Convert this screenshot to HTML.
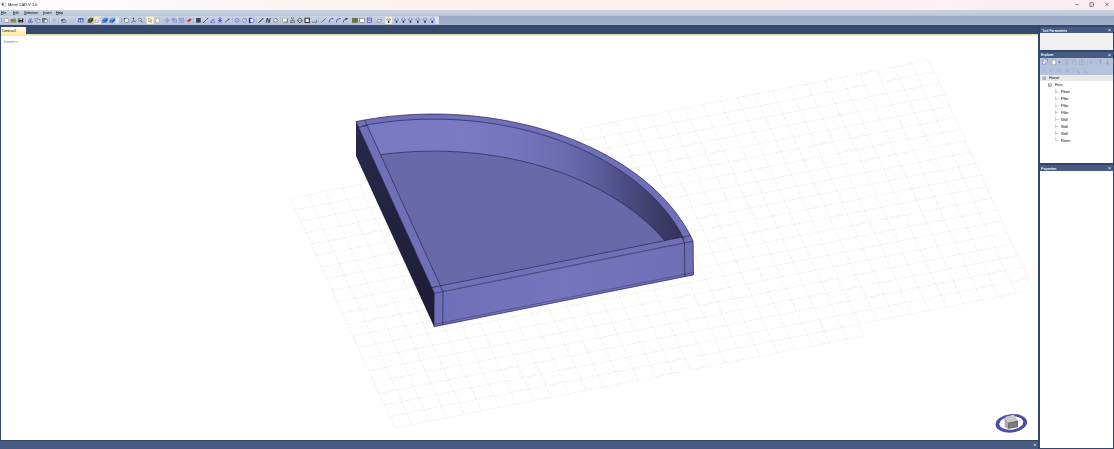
<!DOCTYPE html>
<html><head><meta charset="utf-8"><title>Mirror CAD V 1.0</title>
<style>
html,body{margin:0;padding:0;}
body{width:1114px;height:449px;overflow:hidden;background:#fff;position:relative;font-family:"Liberation Sans",sans-serif;}
.a{position:absolute;}
.t{position:absolute;white-space:nowrap;font-size:4px;line-height:5.8px;color:#222;transform-origin:0 50%;will-change:transform;-webkit-text-stroke:0.05px currentColor;}
.t u{text-decoration-thickness:0.3px;text-underline-offset:0.2px;text-decoration-color:rgba(30,30,30,0.55);}
.ti{color:#333;}
svg{position:absolute;left:0;top:0;}
</style></head><body>
<!-- title bar -->
<div class="a" style="left:0;top:0;width:1114px;height:9.6px;background:linear-gradient(90deg,#fdfcfc 0%,#fcf8f7 14%,#fbf3f0 32%,#fbf1ee 60%,#fcf1f3 85%,#fbebf0 100%);"></div>
<div class="t" style="left:8.10px;top:1.60px;font-size:4.00px;color:#3a3a3a;transform:scale(0.9557,1.0000);">Mirror CAD V 1.0</div>
<!-- menu bar -->
<div class="a" style="left:0;top:9.6px;width:1114px;height:6.4px;background:linear-gradient(180deg,#cbd3e0,#bac6d9);"></div>
<div class="t" style="left:1.10px;top:9.90px;font-size:4.00px;color:#2a2a2a;transform:scale(0.7758,1.0000);"><u>F</u>ile</div>
<div class="t" style="left:13.00px;top:9.90px;font-size:4.00px;color:#2a2a2a;transform:scale(0.8125,1.0000);"><u>E</u>dit</div>
<div class="t" style="left:23.50px;top:9.90px;font-size:4.00px;color:#2a2a2a;transform:scale(0.8569,1.0000);"><u>S</u>election</div>
<div class="t" style="left:42.50px;top:9.90px;font-size:4.00px;color:#2a2a2a;transform:scale(0.8597,1.0000);"><u>I</u>nsert</div>
<div class="t" style="left:55.50px;top:9.90px;font-size:4.00px;color:#2a2a2a;transform:scale(0.8631,1.0000);"><u>H</u>elp</div>
<!-- toolbar band -->
<div class="a" style="left:0;top:16px;width:1114px;height:9.1px;background:linear-gradient(180deg,#9daac7 0%,#9fadc9 72%,#a8b4ce 100%);"></div>
<div class="a" style="left:0;top:16.2px;width:438.5px;height:8.4px;background:linear-gradient(180deg,#cad4e6,#b4c1da);"></div>
<!-- tab strip -->
<div class="a" style="left:0;top:25px;width:1114px;height:8.6px;background:#35496d;"></div>
<div class="a" style="left:0;top:33.6px;width:1039px;height:2.2px;background:linear-gradient(180deg,#dbd3ae,#f4f0e0);"></div>
<div class="a" style="left:1px;top:27px;width:25px;height:7.7px;background:linear-gradient(180deg,#fffef6,#fff6cc 45%,#ffe79a);border-radius:0.6px 0.6px 0 0;"></div>
<div class="t" style="left:2.10px;top:27.70px;font-size:4.00px;color:#3a3a30;transform:scale(0.7445,1.0000);">Construct1</div>
<!-- viewport borders -->
<div class="a" style="left:0;top:33.6px;width:1px;height:407px;background:#35496d;"></div>
<div class="t" style="left:4.30px;top:39.50px;font-size:3.80px;color:#959595;transform:scale(0.8953,1.0000);">Isometric</div>
<!-- status bar -->
<div class="a" style="left:0;top:439.8px;width:1039px;height:9.2px;background:#465a82;"></div>
<div class="a" style="left:0;top:439.8px;width:1039px;height:0.9px;background:#34476a;"></div>
<!-- right panel -->
<div class="a" style="left:1038.1px;top:25px;width:75.9px;height:424px;background:#31466a;"></div>
<div class="a" style="left:1040.3px;top:27px;width:72.3px;height:6.2px;background:#465a82;"></div>
<div class="t" style="left:1041.80px;top:27.50px;font-size:4.00px;color:#fff;transform:scale(0.8584,1.0000);">Tool Parameters</div>
<div class="a" style="left:1040.3px;top:33.4px;width:72.3px;height:16.2px;background:#f0f0f0;"></div>
<div class="a" style="left:1040.3px;top:52.1px;width:72.3px;height:5.8px;background:#465a82;"></div>
<div class="t" style="left:1041.20px;top:52.30px;font-size:4.00px;color:#fff;transform:scale(0.8527,1.0000);">Explorer</div>
<div class="a" style="left:1040.3px;top:57.8px;width:72.3px;height:16.8px;background:#b5c2dc;"></div>
<div class="a" style="left:1040.3px;top:74.6px;width:72.3px;height:88.4px;background:#fff;"></div>
<div class="a" style="left:1040.3px;top:75.1px;width:72.3px;height:6.2px;background:#e9e9e9;"></div>
<div class="a" style="left:1040.3px;top:165.2px;width:72.3px;height:5.9px;background:#465a82;"></div>
<div class="t" style="left:1041.00px;top:165.70px;font-size:4.00px;color:#fff;transform:scale(0.8502,1.0000);">Properties</div>
<div class="a" style="left:1040.3px;top:171.2px;width:72.3px;height:276.6px;background:#fff;"></div>
<div class="t" style="left:1048.50px;top:75.30px;font-size:4.00px;color:#333;transform:scale(0.8822,1.0000);">House</div><div class="t" style="left:1054.50px;top:82.30px;font-size:4.00px;color:#333;transform:scale(0.8339,1.0000);">Floor</div><div class="t" style="left:1060.60px;top:89.20px;font-size:4.00px;color:#333;transform:scale(0.8504,1.0000);">Plane</div><div class="t" style="left:1060.60px;top:96.10px;font-size:4.00px;color:#333;transform:scale(0.8436,1.0000);">Pillar</div><div class="t" style="left:1060.60px;top:103.00px;font-size:4.00px;color:#333;transform:scale(0.8436,1.0000);">Pillar</div><div class="t" style="left:1060.60px;top:109.90px;font-size:4.00px;color:#333;transform:scale(0.8436,1.0000);">Pillar</div><div class="t" style="left:1060.60px;top:116.80px;font-size:4.00px;color:#333;transform:scale(0.8520,1.0000);">Wall</div><div class="t" style="left:1060.60px;top:123.70px;font-size:4.00px;color:#333;transform:scale(0.8520,1.0000);">Wall</div><div class="t" style="left:1060.60px;top:130.60px;font-size:4.00px;color:#333;transform:scale(0.8520,1.0000);">Wall</div><div class="t" style="left:1060.60px;top:137.50px;font-size:4.00px;color:#333;transform:scale(0.8810,1.0000);">Room</div>
<svg style="z-index:0" width="1114" height="449" viewBox="0 0 1114 449">
<defs>
<linearGradient id="gInner" gradientUnits="userSpaceOnUse" x1="370" y1="0" x2="690" y2="0"><stop offset="0" stop-color="#7979c2"/><stop offset="0.3" stop-color="#7a7ac3"/><stop offset="0.47" stop-color="#7474bc"/><stop offset="0.625" stop-color="#6969ae"/><stop offset="0.72" stop-color="#5b5b99"/><stop offset="0.81" stop-color="#4a4a80"/><stop offset="0.905" stop-color="#3b3b67"/><stop offset="1" stop-color="#31315a"/></linearGradient>
<linearGradient id="gLeft" gradientUnits="userSpaceOnUse" x1="356" y1="121" x2="434" y2="326"><stop offset="0" stop-color="#28284a"/><stop offset="1" stop-color="#1d1d36"/></linearGradient>
<linearGradient id="gFront" gradientUnits="userSpaceOnUse" x1="434" y1="0" x2="694" y2="0"><stop offset="0" stop-color="#6f6fb7"/><stop offset="0.5" stop-color="#7575bd"/><stop offset="1" stop-color="#6e6eb5"/></linearGradient>
<clipPath id="cInner"><polygon points="440.41,285.84 367.24,125.59 362.56,125.65 370.72,124.21 378.94,122.95 387.22,121.86 395.53,120.96 403.89,120.23 412.27,119.69 420.66,119.32 429.07,119.14 437.47,119.13 445.87,119.30 454.25,119.65 462.61,120.18 470.93,120.89 479.21,121.77 487.44,122.82 495.62,124.05 503.72,125.44 511.76,127.01 519.72,128.74 527.58,130.64 535.35,132.70 543.02,134.93 550.58,137.31 558.02,139.85 565.34,142.55 572.52,145.40 579.57,148.39 586.47,151.53 593.22,154.82 599.81,158.25 606.24,161.81 612.49,165.51 618.57,169.34 624.46,173.30 630.16,177.38 635.67,181.58 640.97,185.90 646.06,190.33 650.94,194.87 655.60,199.51 660.04,204.25 664.25,209.09 668.22,214.01 671.95,219.03 675.43,224.12 678.67,229.29 681.65,234.53 684.38,239.83 681.86,237.21"/></clipPath>
</defs>
<path d="M290.30 198.20L394.70 428.00M307.70 194.78L412.10 424.58M325.10 191.36L429.50 421.16M342.50 187.94L446.90 417.74M359.90 184.52L464.30 414.32M377.30 181.10L481.70 410.90M394.70 177.68L499.10 407.48M412.10 174.26L516.50 404.06M429.50 170.84L533.90 400.64M446.90 167.42L551.30 397.22M464.30 164.00L568.70 393.80M481.70 160.58L586.10 390.38M499.10 157.16L603.50 386.96M516.50 153.74L620.90 383.54M533.90 150.32L638.30 380.12M551.30 146.90L655.70 376.70M568.70 143.48L673.10 373.28M586.10 140.06L690.50 369.86M603.50 136.64L707.90 366.44M620.90 133.22L725.30 363.02M638.30 129.80L742.70 359.60M655.70 126.38L760.10 356.18M673.10 122.96L777.50 352.76M690.50 119.54L794.90 349.34M707.90 116.12L812.30 345.92M725.30 112.70L829.70 342.50M742.70 109.28L847.10 339.08M760.10 105.86L864.50 335.66M290.30 198.20L760.10 105.86M295.52 209.69L765.32 117.35M300.74 221.18L770.54 128.84M305.96 232.67L775.76 140.33M311.18 244.16L780.98 151.82M316.40 255.65L786.20 163.31M321.62 267.14L791.42 174.80M326.84 278.63L796.64 186.29M332.06 290.12L801.86 197.78M337.28 301.61L807.08 209.27M342.50 313.10L812.30 220.76M347.72 324.59L817.52 232.25M352.94 336.08L822.74 243.74M358.16 347.57L827.96 255.23M363.38 359.06L833.18 266.72M368.60 370.55L838.40 278.21M373.82 382.04L843.62 289.70M379.04 393.53L848.84 301.19M384.26 405.02L854.06 312.68M389.48 416.51L859.28 324.17M394.70 428.00L864.50 335.66M580.88 128.57L586.10 140.06M598.28 125.15L603.50 136.64M615.68 121.73L620.90 133.22M633.08 118.31L638.30 129.80M650.48 114.89L655.70 126.38M667.88 111.47L673.10 122.96M685.28 108.05L690.50 119.54M702.68 104.63L707.90 116.12M720.08 101.21L725.30 112.70M737.48 97.79L742.70 109.28M754.88 94.37L760.10 105.86M772.28 90.95L876.68 320.75M789.68 87.53L894.08 317.33M807.08 84.11L911.48 313.91M824.48 80.69L928.88 310.49M841.88 77.27L946.28 307.07M859.28 73.85L963.68 303.65M876.68 70.43L981.08 300.23M894.08 67.01L998.48 296.81M911.48 63.59L1015.88 293.39M928.88 60.17L1033.28 289.97M580.88 128.57L928.88 60.17M760.10 105.86L934.10 71.66M765.32 117.35L939.32 83.15M770.54 128.84L944.54 94.64M775.76 140.33L949.76 106.13M780.98 151.82L954.98 117.62M786.20 163.31L960.20 129.11M791.42 174.80L965.42 140.60M796.64 186.29L970.64 152.09M801.86 197.78L975.86 163.58M807.08 209.27L981.08 175.07M812.30 220.76L986.30 186.56M817.52 232.25L991.52 198.05M822.74 243.74L996.74 209.54M827.96 255.23L1001.96 221.03M833.18 266.72L1007.18 232.52M838.40 278.21L1012.40 244.01M843.62 289.70L1017.62 255.50M848.84 301.19L1022.84 266.99M854.06 312.68L1028.06 278.48M859.28 324.17L1033.28 289.97" stroke="#e6e6e4" stroke-width="0.44" fill="none"/>
<polygon points="434.40,293.30 356.00,121.60 360.31,120.73 368.72,119.25 377.19,117.94 385.71,116.83 394.28,115.89 402.88,115.15 411.51,114.59 420.16,114.21 428.82,114.02 437.48,114.01 446.13,114.19 454.76,114.55 463.36,115.10 471.94,115.82 480.47,116.73 488.94,117.81 497.36,119.08 505.72,120.51 513.99,122.13 522.19,123.91 530.29,125.87 538.29,127.99 546.19,130.29 553.98,132.74 561.64,135.36 569.18,138.13 576.58,141.07 583.84,144.15 590.95,147.39 597.90,150.77 604.69,154.31 611.31,157.98 617.75,161.79 624.01,165.73 630.08,169.81 635.95,174.01 641.62,178.34 647.08,182.79 652.33,187.35 657.36,192.02 662.16,196.80 666.73,201.69 671.06,206.67 675.15,211.75 678.99,216.91 682.58,222.15 685.91,227.48 688.99,232.87 691.79,238.34 693.10,241.20" fill="#7070b8"/>
<g clip-path="url(#cInner)">
<polygon points="440.41,285.84 367.24,125.59 362.56,125.65 370.72,124.21 378.94,122.95 387.22,121.86 395.53,120.96 403.89,120.23 412.27,119.69 420.66,119.32 429.07,119.14 437.47,119.13 445.87,119.30 454.25,119.65 462.61,120.18 470.93,120.89 479.21,121.77 487.44,122.82 495.62,124.05 503.72,125.44 511.76,127.01 519.72,128.74 527.58,130.64 535.35,132.70 543.02,134.93 550.58,137.31 558.02,139.85 565.34,142.55 572.52,145.40 579.57,148.39 586.47,151.53 593.22,154.82 599.81,158.25 606.24,161.81 612.49,165.51 618.57,169.34 624.46,173.30 630.16,177.38 635.67,181.58 640.97,185.90 646.06,190.33 650.94,194.87 655.60,199.51 660.04,204.25 664.25,209.09 668.22,214.01 671.95,219.03 675.43,224.12 678.67,229.29 681.65,234.53 684.38,239.83 681.86,237.21" fill="url(#gInner)"/>
<polygon points="440.16,316.94 367.25,157.56 362.56,157.62 370.74,156.19 378.98,154.93 387.28,153.85 395.61,152.95 403.99,152.23 412.38,151.69 420.80,151.33 429.22,151.14 437.64,151.13 446.06,151.31 454.45,151.66 462.82,152.18 471.16,152.88 479.46,153.76 487.70,154.80 495.89,156.02 504.01,157.41 512.06,158.97 520.03,160.69 527.90,162.58 535.68,164.63 543.36,166.85 550.93,169.22 558.38,171.74 565.70,174.42 572.90,177.26 579.95,180.24 586.86,183.36 593.61,186.63 600.21,190.04 606.64,193.58 612.89,197.26 618.97,201.07 624.87,205.01 630.57,209.07 636.07,213.25 641.38,217.54 646.47,221.95 651.35,226.46 656.01,231.08 660.44,235.79 664.64,240.60 668.61,245.50 672.33,250.49 675.81,255.55 679.04,260.69 682.02,265.90 684.74,271.18 682.22,268.58" fill="#6969aa"/>
<polyline points="362.56,157.62 370.74,156.19 378.98,154.93 387.28,153.85 395.61,152.95 403.99,152.23 412.38,151.69 420.80,151.33 429.22,151.14 437.64,151.13 446.06,151.31 454.45,151.66 462.82,152.18 471.16,152.88 479.46,153.76 487.70,154.80 495.89,156.02 504.01,157.41 512.06,158.97 520.03,160.69 527.90,162.58 535.68,164.63 543.36,166.85 550.93,169.22 558.38,171.74 565.70,174.42 572.90,177.26 579.95,180.24 586.86,183.36 593.61,186.63 600.21,190.04 606.64,193.58 612.89,197.26 618.97,201.07 624.87,205.01 630.57,209.07 636.07,213.25 641.38,217.54 646.47,221.95 651.35,226.46 656.01,231.08 660.44,235.79 664.64,240.60 668.61,245.50 672.33,250.49 675.81,255.55 679.04,260.69 682.02,265.90 684.74,271.18" fill="none" stroke="#15153f" stroke-width="0.55"/>
</g>
<polygon points="356.00,121.60 434.40,293.30 434.10,326.70 356.00,156.00" fill="url(#gLeft)"/>
<polygon points="434.40,293.30 693.10,241.20 693.50,274.90 434.10,326.70" fill="url(#gFront)"/>
<polyline points="434.40,293.30 356.00,121.60 360.31,120.73 368.72,119.25 377.19,117.94 385.71,116.83 394.28,115.89 402.88,115.15 411.51,114.59 420.16,114.21 428.82,114.02 437.48,114.01 446.13,114.19 454.76,114.55 463.36,115.10 471.94,115.82 480.47,116.73 488.94,117.81 497.36,119.08 505.72,120.51 513.99,122.13 522.19,123.91 530.29,125.87 538.29,127.99 546.19,130.29 553.98,132.74 561.64,135.36 569.18,138.13 576.58,141.07 583.84,144.15 590.95,147.39 597.90,150.77 604.69,154.31 611.31,157.98 617.75,161.79 624.01,165.73 630.08,169.81 635.95,174.01 641.62,178.34 647.08,182.79 652.33,187.35 657.36,192.02 662.16,196.80 666.73,201.69 671.06,206.67 675.15,211.75 678.99,216.91 682.58,222.15 685.91,227.48 688.99,232.87 691.79,238.34 693.10,241.20 434.40,293.30" fill="none" stroke="#15153f" stroke-width="0.63" stroke-opacity="1"/>
<polyline points="443.02,291.56 364.62,119.86" fill="none" stroke="#15153f" stroke-width="0.5599999999999999" stroke-opacity="1"/>
<polyline points="431.79,287.58 690.49,235.48" fill="none" stroke="#15153f" stroke-width="0.5599999999999999" stroke-opacity="1"/>
<polyline points="362.56,125.65 370.72,124.21 378.94,122.95 387.22,121.86 395.53,120.96 403.89,120.23 412.27,119.69 420.66,119.32 429.07,119.14 437.47,119.13 445.87,119.30 454.25,119.65 462.61,120.18 470.93,120.89 479.21,121.77 487.44,122.82 495.62,124.05 503.72,125.44 511.76,127.01 519.72,128.74 527.58,130.64 535.35,132.70 543.02,134.93 550.58,137.31 558.02,139.85 565.34,142.55 572.52,145.40 579.57,148.39 586.47,151.53 593.22,154.82 599.81,158.25 606.24,161.81 612.49,165.51 618.57,169.34 624.46,173.30 630.16,177.38 635.67,181.58 640.97,185.90 646.06,190.33 650.94,194.87 655.60,199.51 660.04,204.25 664.25,209.09 668.22,214.01 671.95,219.03 675.43,224.12 678.67,229.29 681.65,234.53 684.38,239.83" fill="none" stroke="#15153f" stroke-width="0.5599999999999999" stroke-opacity="1"/>
<polyline points="358.61,127.32 367.24,125.59" fill="none" stroke="#15153f" stroke-width="0.5599999999999999" stroke-opacity="1"/>
<polyline points="684.48,242.94 681.86,237.21" fill="none" stroke="#15153f" stroke-width="0.5599999999999999" stroke-opacity="1"/>
<polyline points="434.40,293.30 434.10,326.70 693.50,274.90 693.10,241.20" fill="none" stroke="#15153f" stroke-width="0.63" stroke-opacity="1"/>
<polyline points="443.02,291.56 442.75,324.97" fill="none" stroke="#15153f" stroke-width="0.5599999999999999" stroke-opacity="1"/>
<polyline points="684.48,242.94 684.85,276.63" fill="none" stroke="#15153f" stroke-width="0.5599999999999999" stroke-opacity="1"/>
<polyline points="434.12,324.36 693.47,272.54" fill="none" stroke="#15153f" stroke-width="0.42" stroke-opacity="0.8"/>
<g transform="rotate(-6 1011.3 423.3)">
<path d="M995.50 423.30a15.80 9.20 0 1 1 31.60 0a15.80 9.20 0 1 1 -31.60 0zM999.30 423.00a12.00 6.70 0 1 1 24.00 0a12.00 6.70 0 1 1 -24.00 0z" fill="#4b4bab" fill-rule="evenodd"/>
</g>
<polygon points="1005.2,417.0 1013.6,414.6 1018.0,420.6 1008.0,422.6" fill="#c9c9c9"/>
<polygon points="1004.5,418.2 1005.2,417.0 1008.0,422.6 1007.8,429.0 1004.6,426.4" fill="#acacac"/>
<polygon points="1008.0,422.6 1018.0,420.6 1017.9,427.2 1007.8,429.0" fill="#6e6e6e"/>
<polygon points="1009.4,423.6 1016.8,422.2 1016.8,426.3 1009.4,427.7" fill="#7c7c7c"/>
</svg>
<svg width="1114" height="449" viewBox="0 0 1114 449">
<defs><linearGradient id="fade" x1="0" y1="0" x2="1" y2="0"><stop offset="0" stop-color="#eef2fa" stop-opacity="0.9"/><stop offset="1" stop-color="#dfe6f2" stop-opacity="0.6"/></linearGradient></defs>
<rect x="94.3" y="16.7" width="6.6" height="7.3" fill="#fff6d2" stroke="#efd98f" stroke-width="0.3"/><rect x="146.7" y="16.7" width="6.9" height="7.3" fill="#fff6d2" stroke="#efd98f" stroke-width="0.3"/><rect x="385.2" y="16.7" width="6.8" height="7.3" fill="#fff6d2" stroke="#efd98f" stroke-width="0.3"/>
<g transform="translate(0 20.35) scale(1 0.74) translate(0 -20.2)">
<rect x="1.4" y="17.4" width="0.6" height="5.6" fill="#7f8fb4"/>
<path d="M4.8 17.3h2.6l1.3 1.3v4.5h-3.9z" fill="#fff" stroke="#555" stroke-width="0.45"/>
<path d="M10.8 18.6h2l0.5 0.6h2.8v3.6h-5.3z" fill="#4f5a1c"/><path d="M11.6 20.1h4.9l-0.9 2.7h-4.8z" fill="#8f9a30"/><path d="M13.6 17.6l1.6-.4.5 1.1" stroke="#3a7a3a" stroke-width="0.5" fill="none"/>
<rect x="18.4" y="17.5" width="4.8" height="5.4" fill="#111"/><rect x="19.4" y="17.5" width="2.8" height="2.1" fill="#e8e8e8"/><rect x="19.6" y="20.9" width="2.4" height="2" fill="#777"/>
<rect x="25.6" y="17.2" width="0.5" height="6" fill="#8796b8"/><rect x="26.1" y="17.2" width="0.4" height="6" fill="#e6ecf6"/>
<path d="M29.2 17.3l1.6 3.6M31.6 17.3l-1.6 3.6" stroke="#2b3fa8" stroke-width="0.6" fill="none"/><ellipse cx="29.3" cy="22" rx="0.9" ry="1.15" fill="none" stroke="#2b3fa8" stroke-width="0.6"/><ellipse cx="31.5" cy="22" rx="0.9" ry="1.15" fill="none" stroke="#2b3fa8" stroke-width="0.6"/>
<rect x="35.1" y="17.4" width="2.9" height="3.7" fill="#dfe6f5" stroke="#3a4a9a" stroke-width="0.45"/><rect x="37" y="19.2" width="2.9" height="3.7" fill="#dfe6f5" stroke="#3a4a9a" stroke-width="0.45"/>
<rect x="42.3" y="17.8" width="3.9" height="5" fill="#8a8a3a" stroke="#444" stroke-width="0.4"/><rect x="43.4" y="17.2" width="1.7" height="1.1" fill="#555"/><rect x="44.2" y="19.4" width="3" height="3.6" fill="#e6ecf8" stroke="#3a4a9a" stroke-width="0.4"/>
<rect x="49.5" y="17.2" width="0.5" height="6" fill="#8796b8"/><rect x="50.0" y="17.2" width="0.4" height="6" fill="#e6ecf6"/>
<path d="M52.5 18.2l3.5 4M56 18.2l-3.5 4" stroke="#9aa3b8" stroke-width="0.7" fill="none"/>
<rect x="58.4" y="17.2" width="0.5" height="6" fill="#8796b8"/><rect x="58.9" y="17.2" width="0.4" height="6" fill="#e6ecf6"/>
<path d="M62 20.2c1.2-2 3.4-1.6 3.9.4" stroke="#1a1a1a" stroke-width="0.7" fill="none"/><path d="M61.3 18.6l0.2 2.4 2.2-.6z" fill="#1a1a1a"/><rect x="61.4" y="22.2" width="4.8" height="0.7" fill="#1a1a1a"/>
<path d="M73 20.2c-1.2-2-3.4-1.6-3.9.4" stroke="#b7bfd2" stroke-width="0.7" fill="none"/><rect x="69.2" y="22.2" width="4.6" height="0.6" fill="#b7bfd2"/>
<rect x="75.7" y="17.2" width="0.5" height="6" fill="#8796b8"/><rect x="76.2" y="17.2" width="0.4" height="6" fill="#e6ecf6"/>
<rect x="78.2" y="17.4" width="5.2" height="5.4" fill="#2d3fa6"/><rect x="78.9" y="19" width="1.6" height="3.2" fill="#c9d3ee"/><rect x="81.1" y="19" width="1.6" height="3.2" fill="#c9d3ee"/>
<rect x="85.3" y="17.2" width="0.5" height="6" fill="#8796b8"/><rect x="85.8" y="17.2" width="0.4" height="6" fill="#e6ecf6"/>
<path d="M88.1 19.6l1.9-2.3 3 .2-.3 3.2-1.9 2.4-3-.2z" fill="#56651f" stroke="#262c0c" stroke-width="0.4"/>
<path d="M88.1 19.6l1.9-2.3 3 .2-1.9 2.3z" fill="#6b7a2c"/>
<path d="M91.1 19.8l1.9-2.3-.3 3.2-1.9 2.4z" fill="#38440f"/>
<path d="M88.1 19.6l3 .2 1.9-2.3M91.1 19.8l-.3 3.3" fill="none" stroke="#262c0c" stroke-width="0.32000000000000006"/>
<path d="M95.3 19.6l1.9-2.3 3 .2-.3 3.2-1.9 2.4-3-.2z" fill="#ffffff" stroke="#5548b4" stroke-width="0.5"/>
<path d="M95.3 19.6l1.9-2.3 3 .2-1.9 2.3z" fill="#ffffff"/>
<path d="M98.3 19.8l1.9-2.3-.3 3.2-1.9 2.4z" fill="#e9e6fb"/>
<path d="M95.3 19.6l3 .2 1.9-2.3M98.3 19.8l-.3 3.3" fill="none" stroke="#5548b4" stroke-width="0.4"/>
<path d="M102.6 19.6l1.9-2.3 3 .2-.3 3.2-1.9 2.4-3-.2z" fill="#1f8ee0" stroke="#1b3f90" stroke-width="0.4"/>
<path d="M102.6 19.6l1.9-2.3 3 .2-1.9 2.3z" fill="#45b0f0"/>
<path d="M105.6 19.8l1.9-2.3-.3 3.2-1.9 2.4z" fill="#1565b8"/>
<path d="M102.6 19.6l3 .2 1.9-2.3M105.6 19.8l-.3 3.3" fill="none" stroke="#1b3f90" stroke-width="0.32000000000000006"/>
<path d="M110.0 19.6l1.9-2.3 3 .2-.3 3.2-1.9 2.4-3-.2z" fill="#4a86d8" stroke="#1b3f90" stroke-width="0.4"/>
<path d="M110.0 19.6l1.9-2.3 3 .2-1.9 2.3z" fill="#8cc4f4"/>
<path d="M113.0 19.8l1.9-2.3-.3 3.2-1.9 2.4z" fill="#2a60b0"/>
<path d="M110.0 19.6l3 .2 1.9-2.3M113.0 19.8l-.3 3.3" fill="none" stroke="#1b3f90" stroke-width="0.32000000000000006"/>
<rect x="115.8" y="16.4" width="3.2" height="8" fill="url(#fade)"/>
</g><!--TB2-->
<g transform="translate(0 20.35) scale(1 0.87) translate(0 -20.2)">
<rect x="121.0" y="17.4" width="0.6" height="5.6" fill="#7f8fb4"/>
<circle cx="126.5" cy="20.3" r="2.3" fill="#fff" stroke="#333" stroke-width="0.55"/><path d="M124.3 19.3l-.6-1.7 1.8.2z" fill="#333"/>
<path d="M133.4 17.3v3.6l-2 1.9M133.4 20.9l2.5 1.2" stroke="#444" stroke-width="0.6" fill="none"/><path d="M132.4 18.5l1-1.5 1 1.5z" fill="#444"/><path d="M131.3 22.6l2.1-3.4 2.3 2.6z" fill="#8a8a9a" opacity="0.7"/>
<circle cx="139.9" cy="19.3" r="1.6" fill="#eef4ff" stroke="#333" stroke-width="0.5"/><path d="M141.1 20.6l1.8 2.2" stroke="#333" stroke-width="0.8"/>
<rect x="144.7" y="17.2" width="0.5" height="6" fill="#8796b8"/><rect x="145.2" y="17.2" width="0.4" height="6" fill="#e6ecf6"/>
<path d="M148.7 17.6v4.2l1-.9.8 1.8.8-.4-.8-1.7h1.3z" fill="#fff" stroke="#333" stroke-width="0.4"/>
<path d="M155.9 20.2v-1.8h.7v-.8h.7v-.3h.7v.4h.7v.8h.6v3.2l-.6 1.2h-2.6z" fill="#fff" stroke="#8a7a4a" stroke-width="0.4"/>
<rect x="161.9" y="17.2" width="0.5" height="6" fill="#8796b8"/><rect x="162.4" y="17.2" width="0.4" height="6" fill="#e6ecf6"/>
<path d="M167.1 17.3v5.6M164.6 20.1h5" stroke="#6a78b8" stroke-width="0.6"/><circle cx="167.1" cy="20.1" r="1.4" fill="#aab4dc" stroke="#6a78b8" stroke-width="0.4"/>
<rect x="172" y="17.6" width="3" height="3.4" fill="#a9b4de" stroke="#6a78b8" stroke-width="0.4"/><rect x="173.8" y="19.2" width="3" height="3.4" fill="#a9b4de" stroke="#6a78b8" stroke-width="0.4"/>
<rect x="179.1" y="17.6" width="4.8" height="5" fill="#b8c2e6" stroke="#6a78b8" stroke-width="0.5"/><rect x="180.5" y="19" width="2" height="2.2" fill="#8a96cc"/>
<path d="M186.6 21.2l3-3.2 2.1 1.2-3 3.3z" fill="#d8232a"/><path d="M186.6 21.2l1 .1 1.1 1.2-.1 .5z" fill="#f6f6f6" stroke="#777" stroke-width="0.2"/>
<rect x="193.5" y="17.2" width="0.5" height="6" fill="#8796b8"/><rect x="194.0" y="17.2" width="0.4" height="6" fill="#e6ecf6"/>
<rect x="196.1" y="17.5" width="4.6" height="5.3" fill="#3c4048"/>
<path d="M203.7 22.5l4-4.6" stroke="#222" stroke-width="0.7"/><rect x="203.2" y="22" width="1" height="1" fill="#222"/><rect x="207.2" y="17.4" width="1" height="1" fill="#222"/>
<path d="M210.4 22.6h4.6l-1.6-4z" fill="#b4bce8" stroke="#4a56b0" stroke-width="0.45"/><path d="M210.4 22.6l3.6-4.6" stroke="#333" stroke-width="0.4"/>
<circle cx="220" cy="18.3" r="1" fill="#dfe3fa" stroke="#2030a8" stroke-width="0.6"/><path d="M220 19.3v1.6M218 20.2h4M220 20.9l-1.6 2M220 20.9l1.6 2" stroke="#2030a8" stroke-width="0.7" fill="none"/>
<path d="M225 22.4l4.3-3.8" stroke="#333" stroke-width="0.7"/><path d="M229.6 18.2l-2.2.4 1.4 1.6z" fill="#3040b0"/>
<rect x="232.4" y="17.2" width="0.5" height="6" fill="#8796b8"/><rect x="232.9" y="17.2" width="0.4" height="6" fill="#e6ecf6"/>
<circle cx="237" cy="20.2" r="2.1" fill="#c8d0f0" stroke="#3a48b8" stroke-width="0.55"/><circle cx="237" cy="20.2" r="0.5" fill="#3a48b8"/>
<circle cx="244.4" cy="20.2" r="2.1" fill="#dfe4f8" stroke="#3a48b8" stroke-width="0.55"/><path d="M244.4 20.2l1.3-1.3" stroke="#222" stroke-width="0.45"/>
<path d="M249.6 17.8h2c3.2 0 3.2 4.8 0 4.8h-2z" fill="#f4f6ff" stroke="#2a3ab0" stroke-width="0.8"/><rect x="248.9" y="17.4" width="1.5" height="5.6" fill="#1c2a9c"/>
<rect x="256.3" y="17.2" width="0.5" height="6" fill="#8796b8"/><rect x="256.8" y="17.2" width="0.4" height="6" fill="#e6ecf6"/>
<path d="M258.8 22.9l4.6-5.4" stroke="#111" stroke-width="1"/>
<path d="M266 22.9l1.4-5.4 1.6 5.4 1.4-5.4" stroke="#111" stroke-width="0.85" fill="none"/>
<circle cx="275.7" cy="20.2" r="2.1" fill="#eef0fa" stroke="#222" stroke-width="0.5"/><path d="M275.7 20.2l1-1.2" stroke="#222" stroke-width="0.4"/>
<rect x="280.2" y="17.2" width="0.5" height="6" fill="#8796b8"/><rect x="280.7" y="17.2" width="0.4" height="6" fill="#e6ecf6"/>
<rect x="283.4" y="18.4" width="4.4" height="4.4" fill="#777"/><rect x="282.6" y="17.6" width="4.4" height="4.4" fill="#fff" stroke="#666" stroke-width="0.4"/>
<path d="M290.2 22.6h4.6M290.8 22.6v-2.4h3.4v2.4M292.5 20.2v-2.6" stroke="#333" stroke-width="0.55" fill="none"/><rect x="291.8" y="17.3" width="1.4" height="1.2" fill="#fff" stroke="#333" stroke-width="0.3"/>
<path d="M297.3 20.2l2.6-2.9 2.6 2.9-2.6 2.9z" fill="#e8e8e8" stroke="#222" stroke-width="0.8"/><path d="M297.4 20.2h5" stroke="#333" stroke-width="0.5"/>
<rect x="305.1" y="17.7" width="4.2" height="5" fill="#fff" stroke="#2a2a2a" stroke-width="1.1"/>
<path d="M312.2 22.5h4.4v-2.8" stroke="#444" stroke-width="0.6" fill="none"/>
<rect x="318.8" y="17.2" width="0.5" height="6" fill="#8796b8"/><rect x="319.3" y="17.2" width="0.4" height="6" fill="#e6ecf6"/>
<path d="M321.5 22.6l4.3-4.8" stroke="#2a3ab0" stroke-width="0.7"/>
<path d="M329.2 22.6c0-3 1.6-4.6 4.2-4.6" stroke="#2a3ab0" stroke-width="0.8" fill="none"/>
<path d="M336.4 22.6c0-3 1.6-4.6 4.2-4.6" stroke="#2a3ab0" stroke-width="0.8" fill="none"/>
<path d="M343.4 22.6c0-3 1.2-4.2 3.2-4.2" stroke="#2a3ab0" stroke-width="0.8" fill="none"/><path d="M345.6 17.2l2.4 1.2-2.2 1.4z" fill="#222"/>
<rect x="350.0" y="17.2" width="0.5" height="6" fill="#8796b8"/><rect x="350.5" y="17.2" width="0.4" height="6" fill="#e6ecf6"/>
<rect x="352.6" y="17.9" width="4.7" height="4.6" fill="#6f7d1c" stroke="#3a3a2a" stroke-width="0.5"/>
<rect x="359.8" y="17.9" width="4.7" height="4.6" fill="#fff" stroke="#444" stroke-width="0.5"/>
<rect x="367.6" y="17.5" width="4" height="5.2" fill="#b8c2ee" stroke="#2a3ab0" stroke-width="0.6"/><path d="M368.4 19h2.4M368.4 20.3h2.4" stroke="#2a3ab0" stroke-width="0.4"/>
<rect x="374.1" y="17.2" width="0.5" height="6" fill="#8796b8"/><rect x="374.6" y="17.2" width="0.4" height="6" fill="#e6ecf6"/>
<path d="M376.8 22.2l1.4-3h3.4l-1.4 3z" fill="#eef0fa" stroke="#3a48b8" stroke-width="0.5"/>
<path d="M386.3 19.4l2.3-2 2.3 2h-1.3v.6h-2v-.6z" fill="#fff" stroke="#2a2a90" stroke-width="0.45"/><rect x="387.8" y="20.6" width="1.6" height="2.4" fill="#2a2a90"/>
<path d="M394.2 19.4l2.3-2 2.3 2h-1.3v.6h-2v-.6z" fill="#fff" stroke="#2a2a90" stroke-width="0.45"/><rect x="395.7" y="20.6" width="1.6" height="2.4" fill="#2a2a90"/>
<path d="M401.2 19.4l2.3-2 2.3 2h-1.3v.6h-2v-.6z" fill="#fff" stroke="#2a2a90" stroke-width="0.45"/><rect x="402.7" y="20.6" width="1.6" height="2.4" fill="#2a2a90"/>
<path d="M408.2 19.4l2.3-2 2.3 2h-1.3v.6h-2v-.6z" fill="#fff" stroke="#2a2a90" stroke-width="0.45"/><rect x="409.7" y="20.6" width="1.6" height="2.4" fill="#2a2a90"/>
<path d="M415.5 19.4l2.3-2 2.3 2h-1.3v.6h-2v-.6z" fill="#fff" stroke="#2a2a90" stroke-width="0.45"/><rect x="417.0" y="20.6" width="1.6" height="2.4" fill="#2a2a90"/>
<path d="M422.7 19.4l2.3-2 2.3 2h-1.3v.6h-2v-.6z" fill="#fff" stroke="#2a2a90" stroke-width="0.45"/><rect x="424.2" y="20.6" width="1.6" height="2.4" fill="#2a2a90"/>
<path d="M430.0 19.4l2.3-2 2.3 2h-1.3v.6h-2v-.6z" fill="#fff" stroke="#2a2a90" stroke-width="0.45"/><rect x="431.5" y="20.6" width="1.6" height="2.4" fill="#2a2a90"/>
<rect x="435.6" y="16.4" width="3.4" height="8" fill="url(#fade)"/>
</g>
<path d="M1075.4 4.6h3.2" stroke="#222" stroke-width="0.5"/>
<rect x="1090" y="2.9" width="3.6" height="3.3" fill="none" stroke="#222" stroke-width="0.55"/>
<path d="M1105.3 2.8l3.4 3.4M1108.7 2.8l-3.4 3.4" stroke="#222" stroke-width="0.55"/>
<rect x="3.3" y="2.3" width="2.6" height="4.3" fill="#f2f2f2" stroke="#b4b8b4" stroke-width="0.4"/><rect x="1.7" y="3.3" width="1.8" height="2.1" fill="#2f6b45"/>
<path d="M1108.3 28.9l2.4 2.4M1110.7 28.9l-2.4 2.4" stroke="#fff" stroke-width="0.65"/>
<path d="M1108.3 53.9l2.4 2.4M1110.7 53.9l-2.4 2.4" stroke="#fff" stroke-width="0.65"/>
<path d="M1108.3 167.0l2.4 2.4M1110.7 167.0l-2.4 2.4" stroke="#fff" stroke-width="0.65"/>
<path d="M1033.7 443.7l2.4 2.4M1036.1 443.7l-2.4 2.4" stroke="#e6ebf5" stroke-width="0.65"/>
<path d="M1042.6 61.2l1.8-2 2.9.2-.3 2.8-1.8 2-2.9-.2z" fill="#fff" stroke="#5548b4" stroke-width="0.5"/>
<path d="M1042.6 61.2l2.9.2 1.8-2M1045.5 61.4l-.3 2.8" fill="none" stroke="#5548b4" stroke-width="0.4"/>
<rect x="1049.4" y="59.4" width="0.45" height="5.6" fill="#9aaaca"/>
<path d="M1052.1 59.9h2.3l1.3 1.3v3.6h-3.6z" fill="#fff" stroke="#666" stroke-width="0.4"/>
<path d="M1058.5 61.8h2l-1 1.2z" fill="#222"/>
<rect x="1062.7" y="59.4" width="0.45" height="5.6" fill="#9aaaca"/>
<path d="M1066 59.4l1.4 3.2M1067.8 59.4l-1.4 3.2" stroke="#98a6c6" stroke-width="0.5"/><circle cx="1066" cy="63.8" r="0.8" fill="none" stroke="#98a6c6" stroke-width="0.5"/><circle cx="1067.8" cy="63.8" r="0.8" fill="none" stroke="#98a6c6" stroke-width="0.5"/>
<rect x="1072" y="59.6" width="2.8" height="3.4" fill="none" stroke="#98a6c6" stroke-width="0.45"/><rect x="1073.8" y="61.2" width="2.8" height="3.4" fill="#b4c2dc" stroke="#98a6c6" stroke-width="0.45"/>
<rect x="1079.3" y="59.8" width="3.8" height="4.8" fill="none" stroke="#98a6c6" stroke-width="0.45"/><rect x="1081.2" y="61.4" width="3" height="3.4" fill="#b4c2dc" stroke="#98a6c6" stroke-width="0.45"/>
<rect x="1087.3" y="59.4" width="0.45" height="5.6" fill="#9aaaca"/>
<path d="M1089.4 60.2l3.4 4M1092.8 60.2l-3.4 4" stroke="#98a6c6" stroke-width="0.6"/>
<rect x="1095.8" y="59.4" width="0.45" height="5.6" fill="#9aaaca"/>
<path d="M1100.5 59.6v5M1098.9 61.4l1.6-1.8 1.6 1.8" stroke="#8492b8" stroke-width="0.6" fill="none"/>
<path d="M1107.5 59.6v5M1105.9 62.8l1.6 1.8 1.6-1.8" stroke="#8492b8" stroke-width="0.6" fill="none"/>
<path d="M1042.6 68.6l1.2 3 1.2-3M1045.0 71.2l1.8 1.6" stroke="#98a6c6" stroke-width="0.45" fill="none"/>
<path d="M1049.3 68.6l1.2 3 1.2-3M1051.7 71.2l1.8 1.6" stroke="#98a6c6" stroke-width="0.45" fill="none"/>
<rect x="1056.8" y="68.0" width="0.45" height="5.6" fill="#9aaaca"/>
<circle cx="1060.1" cy="70.4" r="1.5" fill="none" stroke="#98a6c6" stroke-width="0.45"/><path d="M1061.2 71.4l1.6 1.6" stroke="#98a6c6" stroke-width="0.5"/>
<circle cx="1067.4" cy="70.4" r="1.5" fill="none" stroke="#98a6c6" stroke-width="0.45"/><path d="M1068.5 71.4l1.6 1.6" stroke="#98a6c6" stroke-width="0.5"/>
<rect x="1073.6" y="68.0" width="0.45" height="5.6" fill="#9aaaca"/>
<path d="M1076.0 69.2l2 2.6M1078.0 71.2l2 1.8h-2z" stroke="#98a6c6" stroke-width="0.45" fill="none"/>
<path d="M1083.3 69.2l2 2.6M1085.3 71.2l2 1.8h-2z" stroke="#98a6c6" stroke-width="0.45" fill="none"/>
<rect x="1042.9" y="77.0" width="2.6" height="2.6" fill="#fff" stroke="#5a5a5a" stroke-width="0.5"/><path d="M1043.5 78.3h1.4" stroke="#222" stroke-width="0.5"/>
<rect x="1048.7" y="83.9" width="2.6" height="2.6" fill="#fff" stroke="#5a5a5a" stroke-width="0.5"/><path d="M1049.3 85.2h1.4" stroke="#222" stroke-width="0.5"/>
<path d="M1055.7 89V140.4" stroke="#8a8a8a" stroke-width="0.45" stroke-dasharray="4.6 2.3"/>
<path d="M1055.7 92.1h2.9" stroke="#8a8a8a" stroke-width="0.45"/>
<path d="M1055.7 99.0h2.9" stroke="#8a8a8a" stroke-width="0.45"/>
<path d="M1055.7 105.9h2.9" stroke="#8a8a8a" stroke-width="0.45"/>
<path d="M1055.7 112.8h2.9" stroke="#8a8a8a" stroke-width="0.45"/>
<path d="M1055.7 119.7h2.9" stroke="#8a8a8a" stroke-width="0.45"/>
<path d="M1055.7 126.6h2.9" stroke="#8a8a8a" stroke-width="0.45"/>
<path d="M1055.7 133.5h2.9" stroke="#8a8a8a" stroke-width="0.45"/>
<path d="M1055.7 140.4h2.9" stroke="#8a8a8a" stroke-width="0.45"/>
</svg>
</body></html>
